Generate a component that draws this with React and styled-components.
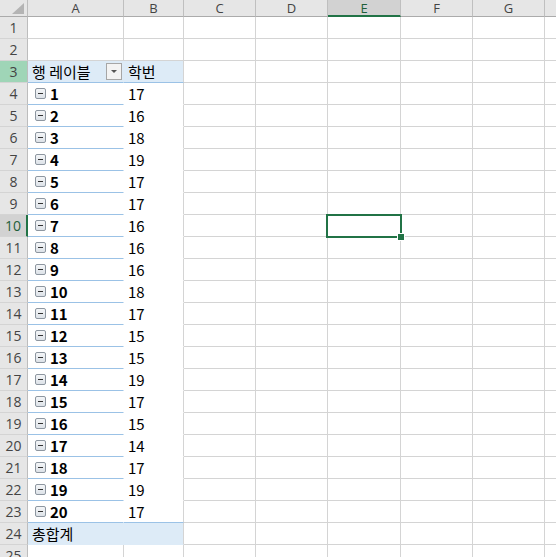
import React from 'react';
import styled, { createGlobalStyle, css } from 'styled-components';

const Global = createGlobalStyle`
  html, body { margin: 0; padding: 0; background: #fff; overflow: hidden; }
  body { width: 556px; height: 557px; }
`;

const COLS = ['A', 'B', 'C', 'D', 'E', 'F', 'G', 'H'];
const VALUES = [17, 16, 18, 19, 17, 17, 16, 16, 16, 18, 17, 15, 15, 19, 17, 15, 14, 17, 19, 17];
const GRID = '#d4d4d4';
const PIVOT_LINE = '#9bc2e6';
const PIVOT_FILL = '#ddebf7';
const GREEN = '#217346';

const Viewport = styled.div`
  width: 556px;
  height: 557px;
  overflow: hidden;
`;

const Sheet = styled.div`
  display: grid;
  grid-template-columns: 28px 96px 60px 72px 72px 73px 72px 72px 72px;
  grid-template-rows: 17px;
  grid-auto-rows: 22px;
  width: max-content;
`;

const Corner = styled.div`
  position: relative;
  background: #e6e6e6;
  border-right: 1px solid #bdbdbd;
  border-bottom: 1px solid #ababab;
  box-sizing: border-box;
  &::after {
    content: '';
    position: absolute;
    right: 3px;
    bottom: 2px;
    width: 12px;
    height: 11px;
    background: #b4b4b4;
    clip-path: polygon(100% 0, 100% 100%, 0 100%);
  }
`;

const ColHead = styled.div`
  box-sizing: border-box;
  background: ${p => (p.$active ? '#d2d2d2' : '#e6e6e6')};
  border-right: 1px solid #bfbfbf;
  border-bottom: ${p => (p.$active ? `2px solid ${GREEN}` : '1px solid #ababab')};
  color: ${p => (p.$active ? '#1e5f3a' : '#444')};
  font-family: "Open Sans", "Liberation Sans", sans-serif;
  font-size: 13px;
  display: flex;
  align-items: center;
  justify-content: center;
  line-height: 16px;
  padding-top: ${p => (p.$active ? '1px' : '0')};
`;

const RowHead = styled.div`
  box-sizing: border-box;
  background: ${p => (p.$active ? '#d2d2d2' : p.$hint ? '#9fd5b7' : '#e6e6e6')};
  border-right: ${p => (p.$active ? `2px solid ${GREEN}` : '1px solid #bdbdbd')};
  border-bottom: 1px solid ${GRID};
  color: ${p => (p.$active ? '#1e5f3a' : '#444')};
  font-family: "Open Sans", "Liberation Sans", sans-serif;
  font-size: 14px;
  display: flex;
  align-items: center;
  justify-content: center;
  line-height: 16px;
`;

const Cell = styled.div`
  position: relative;
  box-sizing: border-box;
  border-right: 1px solid ${GRID};
  border-bottom: 1px solid ${GRID};
  background: #fff;
  font-family: "Noto Sans CJK KR", "Liberation Sans", sans-serif;
  font-size: 15px;
  line-height: 1;
  color: #000;
  display: flex;
  align-items: center;
  padding-left: 4px;
  white-space: nowrap;
  ${p => p.$head && css`
    background: ${PIVOT_FILL};
    border-bottom-color: ${PIVOT_LINE};
  `}
  ${p => p.$total && css`
    background: ${PIVOT_FILL};
    border-bottom-color: ${PIVOT_FILL};
  `}
  ${p => p.$joined && css`
    border-right-color: ${p.$head || p.$total ? PIVOT_FILL : '#fff'};
  `}
  ${p => p.$label && css`
    border-bottom-color: ${PIVOT_LINE};
    padding-left: 7px;
    font-weight: 700;
  `}
  ${p => p.$value && css`
    border-bottom-color: ${p.$last ? PIVOT_LINE : '#fff'};
  `}
`;

const Dropdown = styled.span`
  margin-left: auto;
  margin-right: 1px;
  width: 16px;
  height: 17px;
  box-sizing: border-box;
  border: 1px solid #a6a6a6;
  background: #f3f3f3;
  display: flex;
  align-items: center;
  justify-content: center;
  &::before {
    content: '';
    width: 0;
    height: 0;
    border-left: 3px solid transparent;
    border-right: 3px solid transparent;
    border-top: 3px solid #555;
  }
`;

const Collapse = styled.span`
  width: 11px;
  height: 11px;
  box-sizing: border-box;
  border: 1px solid #8d96a0;
  border-radius: 2px;
  background: linear-gradient(#f4f6f8, #dde2e8);
  display: flex;
  align-items: center;
  justify-content: center;
  margin-right: 4px;
  &::before {
    content: '';
    width: 5px;
    height: 1px;
    background: #333;
  }
`;

const Selection = styled.div`
  position: absolute;
  z-index: 2;
  left: -2px;
  top: -1px;
  width: 76px;
  height: 24px;
  box-sizing: border-box;
  border: 2px solid ${GREEN};
  pointer-events: none;
  &::after {
    content: '';
    position: absolute;
    right: -5px;
    bottom: -5px;
    width: 6px;
    height: 6px;
    background: ${GREEN};
    border: 1px solid #fff;
  }
`;

function Row({ n, children }) {
  return (
    <>
      <RowHead $active={n === 10} $hint={n === 3}>{n}</RowHead>
      {children}
    </>
  );
}

function EmptyCells({ from, row }) {
  return COLS.slice(from).map(c => (
    <Cell key={c}>{c === 'E' && row === 10 ? <Selection /> : null}</Cell>
  ));
}

export default function App() {
  const rows = [];
  for (let n = 1; n <= 25; n++) {
    let content;
    if (n === 3) {
      content = (
        <>
          <Cell $head $joined>행 레이블<Dropdown /></Cell>
          <Cell $head>학번</Cell>
          <EmptyCells from={2} row={n} />
        </>
      );
    } else if (n >= 4 && n <= 23) {
      const idx = n - 4;
      content = (
        <>
          <Cell $label $joined><Collapse />{idx + 1}</Cell>
          <Cell $value $last={n === 23}>{VALUES[idx]}</Cell>
          <EmptyCells from={2} row={n} />
        </>
      );
    } else if (n === 24) {
      content = (
        <>
          <Cell $total $joined>총합계</Cell>
          <Cell $total />
          <EmptyCells from={2} row={n} />
        </>
      );
    } else {
      content = <EmptyCells from={0} row={n} />;
    }
    rows.push(<Row key={n} n={n}>{content}</Row>);
  }

  return (
    <Viewport>
      <Global />
      <Sheet>
        <Corner />
        {COLS.map(c => (
          <ColHead key={c} $active={c === 'E'}>{c}</ColHead>
        ))}
        {rows}
      </Sheet>
    </Viewport>
  );
}
